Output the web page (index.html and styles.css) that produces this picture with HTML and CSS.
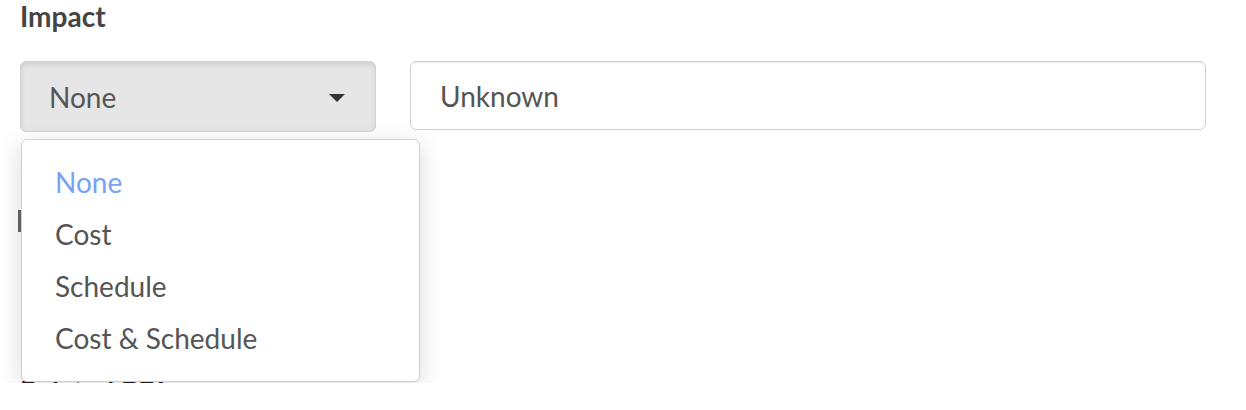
FILE: index.html
```html
<!DOCTYPE html>
<html lang="en">
<head>
  <meta charset="UTF-8" />
  <title>Impact</title>
  <link rel="stylesheet" href="styles.css">
</head>
<body>
  <div class="viewport">
    <div class="form">
      <div class="field">
        <label class="field-label">Impact</label>
        <div class="field-row">
          <div class="dropdown open">
            <button class="select-btn" type="button">
              <span class="select-value">None</span>
              <span class="caret"></span>
            </button>
            <ul class="dropdown-menu">
              <li class="selected">None</li>
              <li>Cost</li>
              <li>Schedule</li>
              <li>Cost &amp; Schedule</li>
            </ul>
          </div>
          <input class="text-input" type="text" value="Unknown" />
        </div>
      </div>

      <!-- mostly hidden behind the open menu -->
      <div class="field field-hidden">
        <div class="note"></div>
      </div>

      <div class="field">
        <label class="field-label dark">Related PBI</label>
      </div>
    </div>
  </div>
</body>
</html>
```

FILE: styles.css
```css
* { box-sizing: border-box; margin: 0; padding: 0; }
html, body { background: #fff; font-family: 'Lato', 'Open Sans', sans-serif; color: #555; }

.viewport { height: 383px; overflow: hidden; }
.form { padding: 0 20px; }

.field-label { display: block; font-size: 28px; font-weight: 700; line-height: 32px; color: #444; }
.field-label.dark { color: #222; }

.field-row { display: flex; align-items: flex-start; gap: 34px; margin-top: 29px; }

.dropdown { position: relative; flex: 0 0 356px; }
.select-btn { width: 100%; height: 71px; display: flex; align-items: center; justify-content: space-between; padding: 0 30px 0 28px; font-family: inherit; font-size: 28px; color: #555; background: #e6e6e6; border: 1px solid #d2d2d2; border-radius: 6px; box-shadow: inset 0 3px 5px rgba(0,0,0,0.1); cursor: pointer; }
.caret { width: 0; height: 0; border-top: 8px solid #333; border-left: 8px solid transparent; border-right: 8px solid transparent; margin-top: 2px; }

.dropdown-menu { position: absolute; top: 78px; left: 1px; width: 399px; padding: 16px 0 17px; list-style: none; background: #fff; border: 1px solid #cfcfcf; border-radius: 6px; box-shadow: 0 6px 24px rgba(0,0,0,0.15); z-index: 10; }
.dropdown-menu li { font-size: 28px; line-height: 52px; padding-left: 33px; color: #555; }
.dropdown-menu li.selected { color: #78a2f4; }

.text-input { width: 796px; height: 69px; padding: 0 29px; font-family: inherit; font-size: 28px; color: #555; background: #fff; border: 1px solid #d0d0d0; border-radius: 6px; box-shadow: inset 0 1px 1px rgba(0,0,0,0.075); outline: none; }

.field-hidden { height: 243px; padding-top: 78px; }
.note { width: 3px; height: 22px; margin-left: -2px; background: #666; }
```
